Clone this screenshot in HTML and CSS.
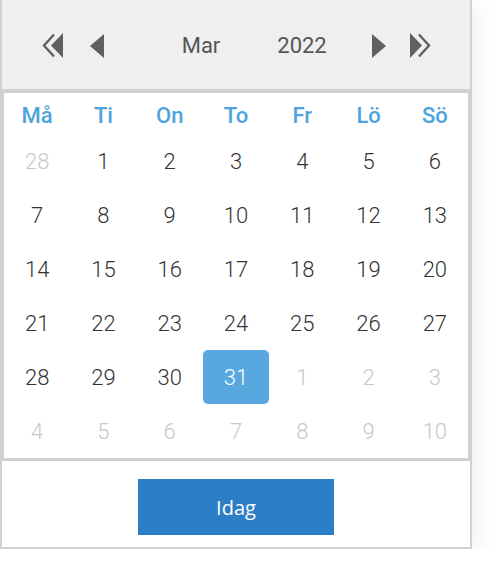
FILE: index.html
```html
<!DOCTYPE html>
<html lang="sv">

<head>
  <meta charset="UTF-8" />
  <meta name="viewport" content="width=device-width, initial-scale=1.0" />
  <title>Datumväljare</title>
  <link rel="stylesheet" href="styles.css">
</head>

<body>
  <div class="picker">
    <!-- navigering -->
    <div class="nav">
      <a href="javaScript:;" class="nav-btn prev-year">
        <svg width="21" height="25" viewBox="0 0 21 25">
          <polyline points="12,1.5 2,12.5 12,23.5" fill="none" stroke="#606060" stroke-width="2.4" />
          <polygon points="21,0 9,12.5 21,25" fill="#606060" />
        </svg>
      </a>
      <a href="javaScript:;" class="nav-btn prev-month">
        <svg width="14" height="24" viewBox="0 0 14 24">
          <polygon points="14,0 0,12 14,24" fill="#606060" />
        </svg>
      </a>
      <span class="month">Mar</span>
      <span class="year">2022</span>
      <a href="javaScript:;" class="nav-btn next-month">
        <svg width="14" height="24" viewBox="0 0 14 24">
          <polygon points="0,0 14,12 0,24" fill="#606060" />
        </svg>
      </a>
      <a href="javaScript:;" class="nav-btn next-year">
        <svg width="21" height="25" viewBox="0 0 21 25">
          <polygon points="0,0 12,12.5 0,25" fill="#606060" />
          <polyline points="9,1.5 19,12.5 9,23.5" fill="none" stroke="#606060" stroke-width="2.4" />
        </svg>
      </a>
    </div>

    <!-- kalender -->
    <div class="days">
      <div class="wd">Må</div>
      <div class="wd">Ti</div>
      <div class="wd">On</div>
      <div class="wd">To</div>
      <div class="wd">Fr</div>
      <div class="wd">Lö</div>
      <div class="wd">Sö</div>
    </div>

    <div class="footer">
      <a href="javaScript:;" class="today">Idag</a>
    </div>
  </div>

  <script src="app.js"></script>
</body>

</html>
```

FILE: app.js
```js
var days = document.querySelector(".days");
// 28 feb + 31 dagar i mars + 10 dagar i april
var list = [{ n: 28, other: true }];
for (let i = 1; i <= 31; i++) {
  list.push({ n: i, other: false });
}
for (let i = 1; i <= 10; i++) {
  list.push({ n: i, other: true });
}
for (let i = 0; i < list.length; i++) {
  var cell = document.createElement("div");
  cell.className = "day";
  if (list[i].other) {
    cell.className += " other";
  }
  // dagens datum
  if (!list[i].other && list[i].n == 31) {
    cell.className += " current";
  }
  cell.textContent = list[i].n;
  days.appendChild(cell);
}
```

FILE: styles.css
```css
* {
  margin: 0;
  padding: 0;
  box-sizing: border-box;
}

a {
  text-decoration: none;
}

body {
  background: #fff;
  font-family: Roboto, "Liberation Sans", sans-serif;
}

.picker {
  width: 472px;
  border: 2px solid #d0d0d0;
  border-top: none;
  background: #fff;
  box-shadow: 0 4px 28px rgba(0, 0, 0, 0.09);
}

.nav {
  display: flex;
  align-items: center;
  height: 91px;
  padding-left: 40px;
  padding-top: 2px;
  background: #efefef;
  border-bottom: 2px solid #d0d0d0;
  color: #555;
  font-size: 22px;
}

.nav-btn {
  display: flex;
}

.prev-month {
  margin-left: 27px;
}

.month,
.year {
  width: 80px;
  text-align: center;
}

.month {
  margin-left: 57px;
}

.year {
  margin-left: 21px;
}

.next-month {
  margin-left: 30px;
}

.next-year {
  margin-left: 24px;
}

.days {
  display: grid;
  grid-template-columns: repeat(7, 1fr);
  grid-template-rows: 41px repeat(6, 54px);
  border: 2px solid #d0d0d0;
  border-bottom-width: 3px;
}

.wd,
.day {
  display: flex;
  align-items: center;
  justify-content: center;
}

.wd {
  padding-top: 3px;
  color: #4ea3dd;
  font-size: 22px;
  font-weight: 500;
}

.day {
  color: #333;
  font-size: 22px;
  font-weight: 300;
}

.other {
  color: #c8c8c8;
}

.current {
  background: #58a7de;
  color: #fff;
  border-radius: 5px;
}

.footer {
  display: flex;
  justify-content: center;
  padding: 19px 0 12px;
  border-top: 2px solid #d0d0d0;
  margin-top: -3px;
}

.today {
  display: flex;
  align-items: center;
  justify-content: center;
  width: 196px;
  height: 56px;
  background: #2c7ec6;
  color: #fff;
  font-family: "Open Sans", "Liberation Sans", sans-serif;
  font-size: 20px;
  font-weight: 500;
}
```
